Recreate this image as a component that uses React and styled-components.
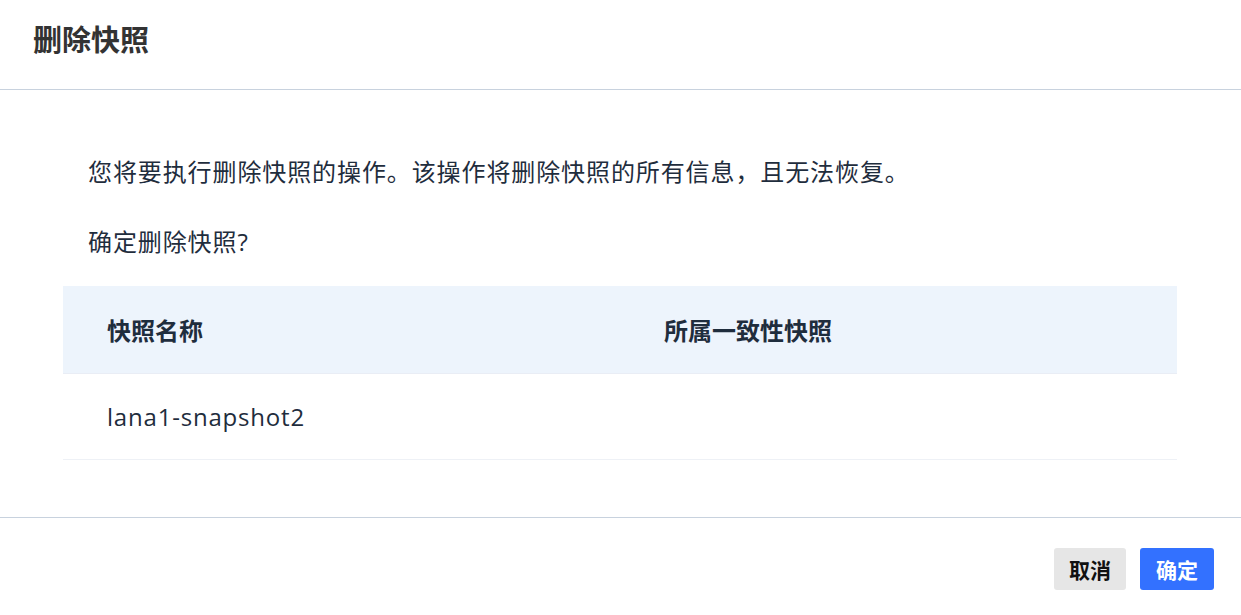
import React from 'react';
import styled, { createGlobalStyle } from 'styled-components';

const GlobalStyle = createGlobalStyle`
  html, body {
    margin: 0;
    padding: 0;
    background: #ffffff;
  }

  body {
    font-family: "Open Sans", "Noto Sans CJK SC", sans-serif;
    color: #1f2d3d;
  }

  * {
    box-sizing: border-box;
  }
`;

const snapshots = [
  { name: 'lana1-snapshot2', group: '' },
];

const App = () => {
  return (
    <>
      <GlobalStyle />
      <Dialog>
        <Header>
          <Title>删除快照</Title>
        </Header>

        <Body>
          <Message>您将要执行删除快照的操作。该操作将删除快照的所有信息，且无法恢复。</Message>
          <Message $gap>确定删除快照?</Message>

          <Table>
            <thead>
              <tr>
                <Th>快照名称</Th>
                <Th>所属一致性快照</Th>
              </tr>
            </thead>
            <tbody>
              {snapshots.map((snap) => (
                <tr key={snap.name}>
                  <Td>{snap.name}</Td>
                  <Td>{snap.group}</Td>
                </tr>
              ))}
            </tbody>
          </Table>
        </Body>

        <Footer>
          <Button>取消</Button>
          <Button $primary>确定</Button>
        </Footer>
      </Dialog>
    </>
  );
};

const Dialog = styled.div`
  width: 1241px;
  height: 615px;
  display: flex;
  flex-direction: column;
  background: #fff;
`;

const Header = styled.header`
  height: 90px;
  padding: 20px 33px 0;
  border-bottom: 1px solid #c8d2de;
`;

const Title = styled.h2`
  margin: 0;
  font-size: 29px;
  line-height: 40px;
  font-weight: 700;
  color: #333;
`;

const Body = styled.section`
  padding: 64px 64px 57px 63px;
  border-bottom: 1px solid #c8d2de;
`;

const Message = styled.p`
  margin: ${(p) => (p.$gap ? '34px 0 26px' : '0')};
  padding-left: 25px;
  font-size: 24px;
  line-height: 36px;
  letter-spacing: 0.9px;
  color: #1f2d3d;
`;

const Table = styled.table`
  width: 100%;
  border-collapse: collapse;
  table-layout: fixed;
`;

const Th = styled.th`
  height: 87px;
  padding: 0 44px;
  text-align: left;
  font-size: 24px;
  font-weight: 700;
  color: #1f2d3d;
  background: #edf4fc;
  border-bottom: 1px solid #e9edf5;
`;

const Td = styled.td`
  height: 86px;
  padding: 0 44px;
  font-size: 24px;
  letter-spacing: 0.8px;
  color: #1f2d3d;
  border-bottom: 1px solid #eef1f6;
`;

const Footer = styled.footer`
  display: flex;
  justify-content: flex-end;
  gap: 14px;
  padding: 30px 27px 0;
`;

const Button = styled.button`
  height: 42px;
  padding: 0 ${(p) => (p.$primary ? 16 : 15)}px;
  border: none;
  border-radius: 3px;
  font-family: "Noto Sans CJK SC", sans-serif;
  font-size: 21px;
  font-weight: ${(p) => (p.$primary ? 700 : 600)};
  color: ${(p) => (p.$primary ? '#fff' : '#111')};
  background: ${(p) => (p.$primary ? '#3371ff' : '#e6e6e6')};
  cursor: pointer;
`;

export default App;
